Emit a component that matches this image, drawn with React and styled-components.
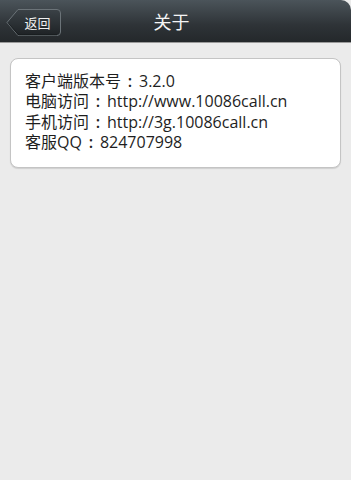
import React from "react";
import styled, { createGlobalStyle } from "styled-components";

const Global = createGlobalStyle`
  html, body { margin: 0; padding: 0; background: #ebebeb; }
  body { font-family: "Open Sans", "Noto Sans CJK SC", sans-serif; }
  #root { min-height: 480px; }
`;

const Page = styled.div`
  width: 351px;
  min-height: 480px;
  background: #ebebeb;
  display: flex;
  flex-direction: column;
`;

const Header = styled.header`
  position: relative;
  height: 42px;
  display: flex;
  align-items: center;
  justify-content: center;
  background: linear-gradient(#4b545a, #2e3337 60%, #24282b);
  border-top-right-radius: 10px;
  border-bottom: 1px solid #9a9a9a;
`;

const Title = styled.h1`
  margin: 0 8px 0 0;
  font-family: "Noto Sans CJK SC", sans-serif;
  font-size: 18px;
  font-weight: normal;
  color: #f4f4f4;
`;

const BackButton = styled.button`
  position: absolute;
  left: 6px;
  top: 8px;
  width: 56px;
  height: 29px;
  padding: 0;
  border: none;
  background: none;
  display: flex;
  align-items: center;
  justify-content: center;
  cursor: pointer;
`;

const BackShape = styled.svg`
  position: absolute;
  inset: 0;
`;

const BackLabel = styled.span`
  position: relative;
  font-family: "Noto Sans CJK SC", sans-serif;
  font-size: 13px;
  color: #f0f0f0;
  margin-left: 7px;
`;

const Content = styled.main`
  padding: 15px 10px;
`;

const Card = styled.section`
  background: #ffffff;
  border: 1px solid #c4c4c4;
  border-radius: 8px;
  box-shadow: 0 1px 1px rgba(0,0,0,0.12);
  padding: 12px 14px 14px;
`;

const Line = styled.div`
  display: flex;
  align-items: center;
  height: 20.4px;
  font-size: 16px;
  line-height: 20.4px;
  color: #1e1e1e;
  white-space: nowrap;
`;

const Colon = styled.span`
  display: inline-block;
  width: 18px;
  text-align: center;
  font-family: "Open Sans", sans-serif;
  font-weight: 600;
`;

const rows = [
  ["客户端版本号", "3.2.0"],
  ["电脑访问", "http://www.10086call.cn"],
  ["手机访问", "http://3g.10086call.cn"],
  ["客服QQ", "824707998"],
];

export default function App() {
  return (
    <>
      <Global />
      <Page>
        <Header>
          <BackButton>
            <BackShape width="56" height="29" viewBox="0 0 56 29">
              <defs>
                <linearGradient id="bb" x1="0" y1="0" x2="0" y2="1">
                  <stop offset="0" stopColor="#3b4247" />
                  <stop offset="1" stopColor="#1e2225" />
                </linearGradient>
              </defs>
              <path
                d="M1 14.5 L12 1.5 H51 Q54.5 1.5 54.5 5 V24 Q54.5 27.5 51 27.5 H12 Z"
                fill="url(#bb)"
                stroke="#6b7378"
                strokeWidth="1"
              />
              <path
                d="M2.5 15.5 L12.5 27 H51"
                fill="none"
                stroke="#0e1012"
                strokeWidth="1"
                opacity="0.6"
              />
            </BackShape>
            <BackLabel>返回</BackLabel>
          </BackButton>
          <Title>关于</Title>
        </Header>
        <Content>
          <Card>
            {rows.map(([k, v]) => (
              <Line key={k}>
                <span>{k}</span>
                <Colon>:</Colon>
                <span>{v}</span>
              </Line>
            ))}
          </Card>
        </Content>
      </Page>
    </>
  );
}
